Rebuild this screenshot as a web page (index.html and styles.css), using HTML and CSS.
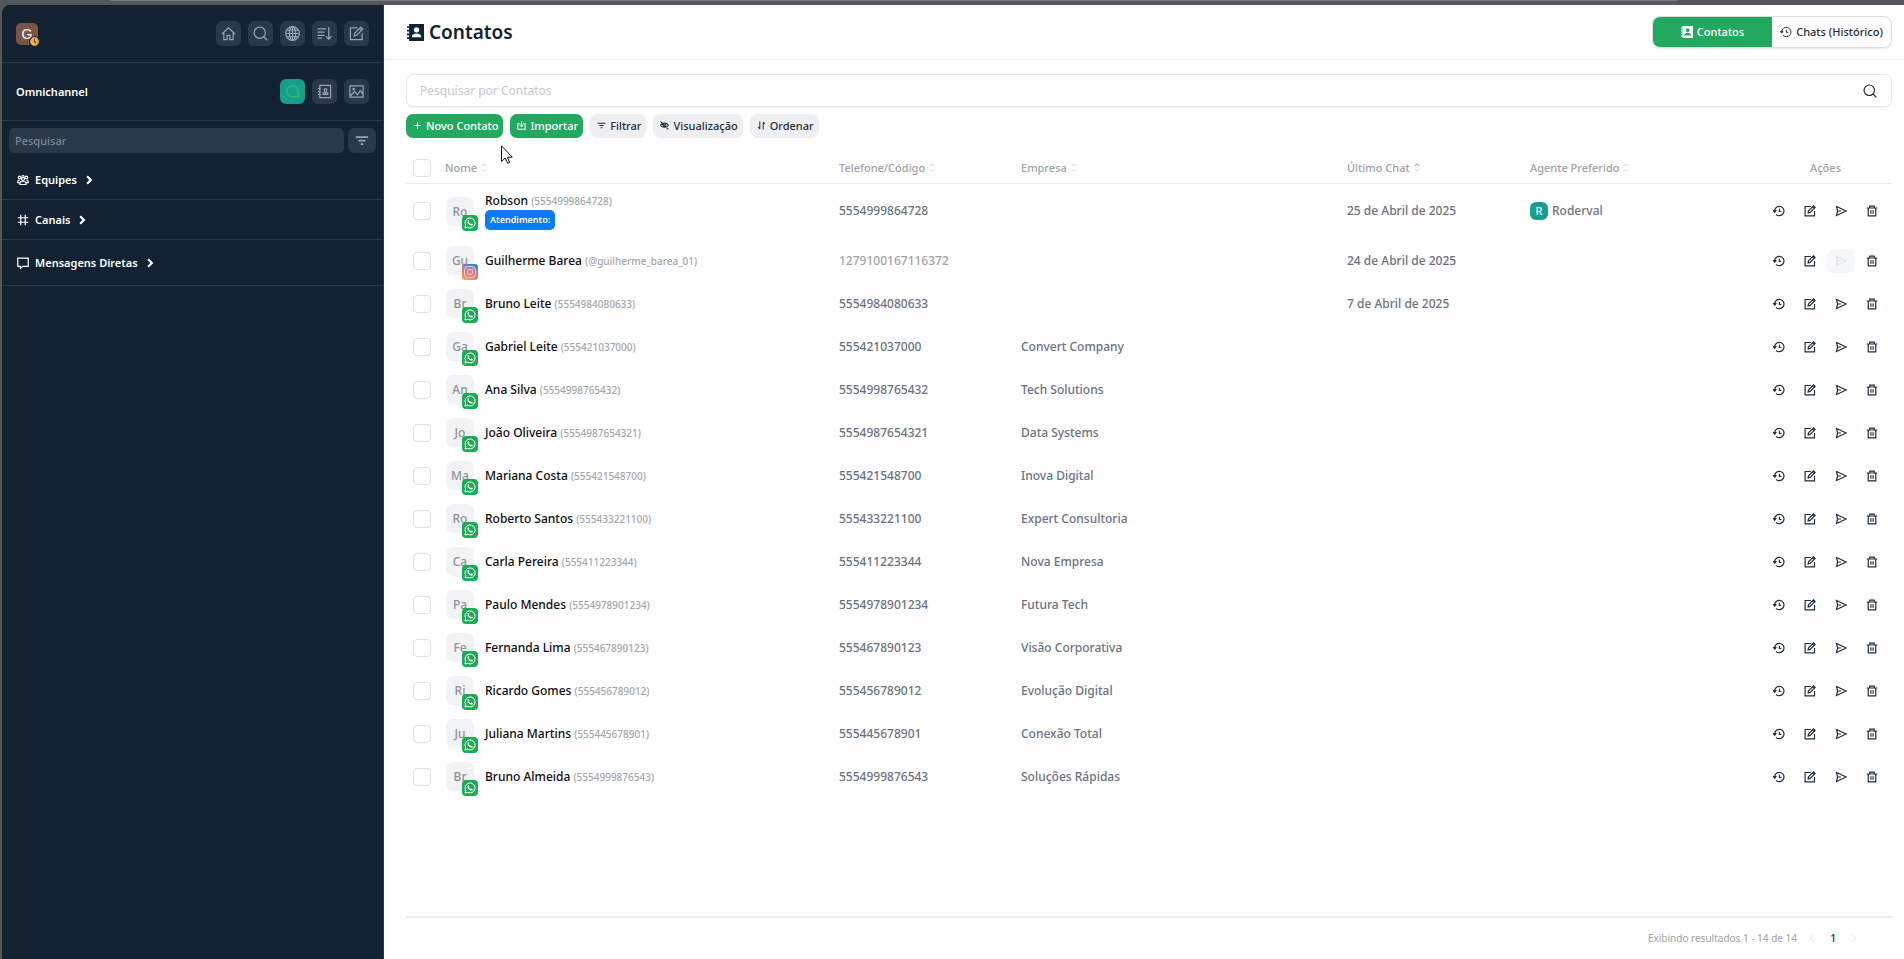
FILE: index.html
```html
<!DOCTYPE html>
<html lang="pt-BR">
<head>
  <meta charset="UTF-8">
  <meta name="viewport" content="width=device-width, initial-scale=1.0">
  <title>Contatos</title>
  <link rel="stylesheet" href="styles.css">
</head>
<body>

  <!-- Icon sprite -->
  <svg class="sprite" aria-hidden="true">
    <symbol id="home" viewBox="0 0 16 16"><path d="M1 8.500 8 2l7 6.500M3 7v7.500h3.500V10h3v4.500H13V7"/></symbol>
    <symbol id="search" viewBox="0 0 16 16"><circle cx="7.200" cy="7.200" r="6"/><path d="M11.500 11.500 15.300 15.300"/></symbol>
    <symbol id="globe" viewBox="0 0 16 16"><circle cx="8" cy="8" r="7.300"/><ellipse cx="8" cy="8" rx="3.400" ry="7.300"/><path d="M1 8h14M8 1v14M2 4.500h12M2 11.500h12"/></symbol>
    <symbol id="sort" viewBox="0 0 16 16"><path d="M.5 3h9M.5 6.500h7.500M.5 10h7.500M.5 13h5M12.500 1v13M9.500 11l3 3 3-3"/></symbol>
    <symbol id="edit" viewBox="0 0 16 16"><path d="M9 2H1.500v12.500H14V8M5.500 10.500l.5-2.800 6.600-6.600 2.200 2.200-6.600 6.600zM11.200 2.600l2.200 2.200"/></symbol>
    <symbol id="bubble" viewBox="0 0 16 16"><path d="M9 14H7.500A5.500 5.500 0 0 1 2 8.500v-1A5.500 5.500 0 0 1 7.500 2h1A5.500 5.500 0 0 1 14 7.500v3.500l1 2.500H9"/></symbol>
    <symbol id="book" viewBox="0 0 16 16"><path d="M3 1.500h11.500v13H3zM1 5h3M1 8h3M1 11h3M6.500 11V9.500h5V11z"/><circle cx="9" cy="6.500" r="1.500"/></symbol>
    <symbol id="image" viewBox="0 0 16 16"><path d="M1 2h14v12H1zM1.500 12.500 6 8l3 3.500 3-4.500 3 4"/><circle cx="5" cy="5.500" r=".8"/></symbol>
    <symbol id="filter" viewBox="0 0 16 16"><path d="M1 4h14M4 8h8M6.500 12h3"/></symbol>
    <symbol id="team" viewBox="0 0 16 16"><circle cx="8" cy="6.500" r="2"/><circle cx="3.500" cy="4.500" r="1.800"/><circle cx="12.500" cy="4.500" r="1.800"/><path d="M4 14v-1.500C4 10.500 5.500 10 8 10s4 .5 4 2.500V14zM3.500 11.500H1V9.500C1 8.500 2 8 4 8M12.500 11.500H15V9.500c0-1-1-1.500-3-1.500M6.500 3.500a1.500 1.500 0 0 1 3 0"/></symbol>
    <symbol id="hash" viewBox="0 0 16 16"><path d="M5 1v14M11 1v14M1 5h14M1 11h14"/></symbol>
    <symbol id="message" viewBox="0 0 16 16"><path d="M1 1.500h14v11H8L4.500 15v-2.500H1z"/></symbol>
    <symbol id="right" viewBox="0 0 16 16"><path d="m5.500 3 5 5-5 5"/></symbol>
    <symbol id="left" viewBox="0 0 16 16"><path d="m10.500 3-5 5 5 5"/></symbol>
    <symbol id="bookFill" viewBox="0 0 16 16"><path fill="currentColor" stroke="none" fill-rule="evenodd" d="M2 0h14v16H2v-2H0v-1.500h2V10.500H0V9h2V7H0V5.500h2V3.500H0V2h2zm7 3a2.500 2.500 0 1 0 0 5 2.500 2.500 0 0 0 0-5zm-4.500 9.500h9c0-2-1.800-3.500-4.500-3.500s-4.500 1.500-4.500 3.500z"/></symbol>
    <symbol id="history" viewBox="0 0 16 16"><path d="M2.200 8A6.200 6.200 0 1 1 4 12.400M8.500 5v3.500H11"/><path fill="currentColor" d="M.8 7.300h3L2.300 9.500z"/></symbol>
    <symbol id="send" viewBox="0 0 16 16"><path d="m2 2 13 6-13 6 1.500-6zM3.500 8H8"/></symbol>
    <symbol id="trash" viewBox="0 0 16 16"><path d="M1 4h14M5 4V1.500h6V4M3 4v10.500h10V4M6.500 7v4.500M9.500 7v4.500"/></symbol>
    <symbol id="plus" viewBox="0 0 16 16"><path d="M8 2v12M2 8h12"/></symbol>
    <symbol id="import" viewBox="0 0 16 16"><path d="M5 5H1.500v9.500h13V5H11M8 1v9M5 7l3 3 3-3"/></symbol>
    <symbol id="hidden" viewBox="0 0 16 16"><path d="M1 7.500C4 2.500 12 2.500 15 7.500 12 12.500 4 12.500 1 7.500zM1 1l14 14"/><circle cx="8" cy="7.500" r="2.500"/></symbol>
    <symbol id="order" viewBox="0 0 16 16"><path d="M5 1v13M2 11l3 3M11 15V2M11 2l3 3"/></symbol>
    <symbol id="sorter" viewBox="0 0 8 12"><path class="asc" d="m1 4 3-3 3 3"/><path class="desc" d="m1 8 3 3 3-3"/></symbol>
    <symbol id="whatsapp" viewBox="0 0 16 16">
      <rect width="16" height="16" rx="4" fill="#1cab55" stroke="none"/>
      <path stroke="#fff" stroke-width="1" d="m3 13 .7-2.600A5 5 0 1 1 5.600 12.300z"/>
      <path fill="#fff" stroke="none" d="M6 5.200c.6-.4.900-.1 1.300 1.200l-.5.700c.5 1 1.100 1.600 2.100 2l.7-.7c1.300.5 1.500.8 1.100 1.500-.8 1.200-2.600.7-3.900-.6C5.500 8 5 6 6 5.200z"/>
    </symbol>
    <symbol id="instagram" viewBox="0 0 16 16">
      <linearGradient id="insta" x1="0" y1="1" x2=".4" y2="0"><stop offset="0" stop-color="#efb266"/><stop offset=".45" stop-color="#e27c77"/><stop offset=".75" stop-color="#b77ba5"/><stop offset="1" stop-color="#3f83c4"/></linearGradient>
      <rect width="16" height="16" rx="3" fill="url(#insta)" stroke="none"/>
      <g stroke="#f6cfc4" stroke-width="1"><rect x="2.500" y="2.500" width="11" height="11" rx="3.500"/><circle cx="8" cy="8" r="2.700"/></g>
      <circle cx="11" cy="5" r=".8" fill="#f6cfc4" stroke="none"/>
    </symbol>
  </svg>

  <div class="window-bar"></div>

  <div class="app">
    <aside class="sidebar">
      <div class="sidebar-head">
        <div class="user">G
          <svg class="user-status" viewBox="0 0 10 10"><circle cx="5" cy="5" r="4.500" fill="#e9b04e" stroke="#122231"/><path stroke="#5c4a2c" d="M5 2.500V5l1.500 1.500"/></svg>
        </div>
        <nav class="tools">
          <button class="tool" aria-label="Início"><svg><use href="#home"/></svg></button>
          <button class="tool" aria-label="Buscar"><svg><use href="#search"/></svg></button>
          <button class="tool" aria-label="Diretório"><svg><use href="#globe"/></svg></button>
          <button class="tool" aria-label="Organizar"><svg><use href="#sort"/></svg></button>
          <button class="tool" aria-label="Criar novo"><svg><use href="#edit"/></svg></button>
        </nav>
      </div>

      <div class="sidebar-head">
        <strong>Omnichannel</strong>
        <nav class="tools">
          <button class="tool active" aria-label="Atendimento"><svg><use href="#bubble"/></svg></button>
          <button class="tool" aria-label="Contatos"><svg><use href="#book"/></svg></button>
          <button class="tool" aria-label="Mídia"><svg><use href="#image"/></svg></button>
        </nav>
      </div>

      <div class="sidebar-search">
        <input type="text" placeholder="Pesquisar" aria-label="Pesquisar">
        <button class="tool" aria-label="Filtrar"><svg><use href="#filter"/></svg></button>
      </div>

      <button class="group"><svg><use href="#team"/></svg>Equipes<svg class="arrow"><use href="#right"/></svg></button>
      <button class="group"><svg><use href="#hash"/></svg>Canais<svg class="arrow"><use href="#right"/></svg></button>
      <button class="group tall"><svg><use href="#message"/></svg>Mensagens Diretas<svg class="arrow"><use href="#right"/></svg></button>
    </aside>

    <main class="main">
      <header class="page-head">
        <h1><svg><use href="#bookFill"/></svg>Contatos</h1>
        <div class="tabs">
          <button class="tab selected"><svg><use href="#bookFill"/></svg>Contatos</button>
          <button class="tab"><svg><use href="#history"/></svg>Chats (Histórico)</button>
        </div>
      </header>

      <div class="content">
        <div class="search">
          <input type="text" placeholder="Pesquisar por Contatos" aria-label="Pesquisar por Contatos">
          <svg><use href="#search"/></svg>
        </div>

        <div class="toolbar">
          <button class="btn primary"><svg><use href="#plus"/></svg>Novo Contato</button>
          <button class="btn primary"><svg><use href="#import"/></svg>Importar</button>
          <button class="btn"><svg><use href="#filter"/></svg>Filtrar</button>
          <button class="btn"><svg><use href="#hidden"/></svg>Visualização</button>
          <button class="btn"><svg><use href="#order"/></svg>Ordenar</button>
        </div>

        <table class="contacts">
          <colgroup>
            <col class="col-check"><col class="col-name"><col class="col-phone"><col class="col-company"><col class="col-chat"><col class="col-agent"><col class="col-actions">
          </colgroup>
          <thead>
            <tr>
              <th><input type="checkbox" aria-label="Selecionar todos"></th>
              <th>Nome<svg class="sorter"><use href="#sorter"/></svg></th>
              <th>Telefone/Código<svg class="sorter"><use href="#sorter"/></svg></th>
              <th>Empresa<svg class="sorter"><use href="#sorter"/></svg></th>
              <th>Último Chat<svg class="sorter sorted"><use href="#sorter"/></svg></th>
              <th>Agente Preferido<svg class="sorter"><use href="#sorter"/></svg></th>
              <th class="center">Ações</th>
            </tr>
          </thead>
          <tbody>
            <tr class="first">
              <td><input type="checkbox" aria-label="Robson"></td>
              <td><div class="contact"><span class="avatar">Ro<svg><use href="#whatsapp"/></svg></span><div><b>Robson</b> <small>(5554999864728)</small><span class="tag">Atendimento:</span></div></div></td>
              <td>5554999864728</td><td></td><td>25 de Abril de 2025</td>
              <td><div class="agent"><span>R</span>Roderval</div></td>
              <td><div class="actions"><button aria-label="Histórico"><svg><use href="#history"/></svg></button><button aria-label="Editar"><svg><use href="#edit"/></svg></button><button aria-label="Enviar"><svg><use href="#send"/></svg></button><button aria-label="Excluir"><svg><use href="#trash"/></svg></button></div></td>
            </tr>
            <tr>
              <td><input type="checkbox" aria-label="Guilherme Barea"></td>
              <td><div class="contact"><span class="avatar">Gu<svg><use href="#instagram"/></svg></span><div><b>Guilherme Barea</b> <small>(@guilherme_barea_01)</small></div></div></td>
              <td class="muted">1279100167116372</td><td></td><td>24 de Abril de 2025</td><td></td>
              <td><div class="actions"><button aria-label="Histórico"><svg><use href="#history"/></svg></button><button aria-label="Editar"><svg><use href="#edit"/></svg></button><button aria-label="Enviar" disabled><svg><use href="#send"/></svg></button><button aria-label="Excluir"><svg><use href="#trash"/></svg></button></div></td>
            </tr>
            <tr>
              <td><input type="checkbox" aria-label="Bruno Leite"></td>
              <td><div class="contact"><span class="avatar">Br<svg><use href="#whatsapp"/></svg></span><div><b>Bruno Leite</b> <small>(5554984080633)</small></div></div></td>
              <td>5554984080633</td><td></td><td>7 de Abril de 2025</td><td></td>
              <td><div class="actions"><button aria-label="Histórico"><svg><use href="#history"/></svg></button><button aria-label="Editar"><svg><use href="#edit"/></svg></button><button aria-label="Enviar"><svg><use href="#send"/></svg></button><button aria-label="Excluir"><svg><use href="#trash"/></svg></button></div></td>
            </tr>
            <tr>
              <td><input type="checkbox" aria-label="Gabriel Leite"></td>
              <td><div class="contact"><span class="avatar">Ga<svg><use href="#whatsapp"/></svg></span><div><b>Gabriel Leite</b> <small>(555421037000)</small></div></div></td>
              <td>555421037000</td><td>Convert Company</td><td></td><td></td>
              <td><div class="actions"><button aria-label="Histórico"><svg><use href="#history"/></svg></button><button aria-label="Editar"><svg><use href="#edit"/></svg></button><button aria-label="Enviar"><svg><use href="#send"/></svg></button><button aria-label="Excluir"><svg><use href="#trash"/></svg></button></div></td>
            </tr>
            <tr>
              <td><input type="checkbox" aria-label="Ana Silva"></td>
              <td><div class="contact"><span class="avatar">An<svg><use href="#whatsapp"/></svg></span><div><b>Ana Silva</b> <small>(5554998765432)</small></div></div></td>
              <td>5554998765432</td><td>Tech Solutions</td><td></td><td></td>
              <td><div class="actions"><button aria-label="Histórico"><svg><use href="#history"/></svg></button><button aria-label="Editar"><svg><use href="#edit"/></svg></button><button aria-label="Enviar"><svg><use href="#send"/></svg></button><button aria-label="Excluir"><svg><use href="#trash"/></svg></button></div></td>
            </tr>
            <tr>
              <td><input type="checkbox" aria-label="João Oliveira"></td>
              <td><div class="contact"><span class="avatar">Jo<svg><use href="#whatsapp"/></svg></span><div><b>João Oliveira</b> <small>(5554987654321)</small></div></div></td>
              <td>5554987654321</td><td>Data Systems</td><td></td><td></td>
              <td><div class="actions"><button aria-label="Histórico"><svg><use href="#history"/></svg></button><button aria-label="Editar"><svg><use href="#edit"/></svg></button><button aria-label="Enviar"><svg><use href="#send"/></svg></button><button aria-label="Excluir"><svg><use href="#trash"/></svg></button></div></td>
            </tr>
            <tr>
              <td><input type="checkbox" aria-label="Mariana Costa"></td>
              <td><div class="contact"><span class="avatar">Ma<svg><use href="#whatsapp"/></svg></span><div><b>Mariana Costa</b> <small>(555421548700)</small></div></div></td>
              <td>555421548700</td><td>Inova Digital</td><td></td><td></td>
              <td><div class="actions"><button aria-label="Histórico"><svg><use href="#history"/></svg></button><button aria-label="Editar"><svg><use href="#edit"/></svg></button><button aria-label="Enviar"><svg><use href="#send"/></svg></button><button aria-label="Excluir"><svg><use href="#trash"/></svg></button></div></td>
            </tr>
            <tr>
              <td><input type="checkbox" aria-label="Roberto Santos"></td>
              <td><div class="contact"><span class="avatar">Ro<svg><use href="#whatsapp"/></svg></span><div><b>Roberto Santos</b> <small>(555433221100)</small></div></div></td>
              <td>555433221100</td><td>Expert Consultoria</td><td></td><td></td>
              <td><div class="actions"><button aria-label="Histórico"><svg><use href="#history"/></svg></button><button aria-label="Editar"><svg><use href="#edit"/></svg></button><button aria-label="Enviar"><svg><use href="#send"/></svg></button><button aria-label="Excluir"><svg><use href="#trash"/></svg></button></div></td>
            </tr>
            <tr>
              <td><input type="checkbox" aria-label="Carla Pereira"></td>
              <td><div class="contact"><span class="avatar">Ca<svg><use href="#whatsapp"/></svg></span><div><b>Carla Pereira</b> <small>(555411223344)</small></div></div></td>
              <td>555411223344</td><td>Nova Empresa</td><td></td><td></td>
              <td><div class="actions"><button aria-label="Histórico"><svg><use href="#history"/></svg></button><button aria-label="Editar"><svg><use href="#edit"/></svg></button><button aria-label="Enviar"><svg><use href="#send"/></svg></button><button aria-label="Excluir"><svg><use href="#trash"/></svg></button></div></td>
            </tr>
            <tr>
              <td><input type="checkbox" aria-label="Paulo Mendes"></td>
              <td><div class="contact"><span class="avatar">Pa<svg><use href="#whatsapp"/></svg></span><div><b>Paulo Mendes</b> <small>(5554978901234)</small></div></div></td>
              <td>5554978901234</td><td>Futura Tech</td><td></td><td></td>
              <td><div class="actions"><button aria-label="Histórico"><svg><use href="#history"/></svg></button><button aria-label="Editar"><svg><use href="#edit"/></svg></button><button aria-label="Enviar"><svg><use href="#send"/></svg></button><button aria-label="Excluir"><svg><use href="#trash"/></svg></button></div></td>
            </tr>
            <tr>
              <td><input type="checkbox" aria-label="Fernanda Lima"></td>
              <td><div class="contact"><span class="avatar">Fe<svg><use href="#whatsapp"/></svg></span><div><b>Fernanda Lima</b> <small>(555467890123)</small></div></div></td>
              <td>555467890123</td><td>Visão Corporativa</td><td></td><td></td>
              <td><div class="actions"><button aria-label="Histórico"><svg><use href="#history"/></svg></button><button aria-label="Editar"><svg><use href="#edit"/></svg></button><button aria-label="Enviar"><svg><use href="#send"/></svg></button><button aria-label="Excluir"><svg><use href="#trash"/></svg></button></div></td>
            </tr>
            <tr>
              <td><input type="checkbox" aria-label="Ricardo Gomes"></td>
              <td><div class="contact"><span class="avatar">Ri<svg><use href="#whatsapp"/></svg></span><div><b>Ricardo Gomes</b> <small>(555456789012)</small></div></div></td>
              <td>555456789012</td><td>Evolução Digital</td><td></td><td></td>
              <td><div class="actions"><button aria-label="Histórico"><svg><use href="#history"/></svg></button><button aria-label="Editar"><svg><use href="#edit"/></svg></button><button aria-label="Enviar"><svg><use href="#send"/></svg></button><button aria-label="Excluir"><svg><use href="#trash"/></svg></button></div></td>
            </tr>
            <tr>
              <td><input type="checkbox" aria-label="Juliana Martins"></td>
              <td><div class="contact"><span class="avatar">Ju<svg><use href="#whatsapp"/></svg></span><div><b>Juliana Martins</b> <small>(555445678901)</small></div></div></td>
              <td>555445678901</td><td>Conexão Total</td><td></td><td></td>
              <td><div class="actions"><button aria-label="Histórico"><svg><use href="#history"/></svg></button><button aria-label="Editar"><svg><use href="#edit"/></svg></button><button aria-label="Enviar"><svg><use href="#send"/></svg></button><button aria-label="Excluir"><svg><use href="#trash"/></svg></button></div></td>
            </tr>
            <tr>
              <td><input type="checkbox" aria-label="Bruno Almeida"></td>
              <td><div class="contact"><span class="avatar">Br<svg><use href="#whatsapp"/></svg></span><div><b>Bruno Almeida</b> <small>(5554999876543)</small></div></div></td>
              <td>5554999876543</td><td>Soluções Rápidas</td><td></td><td></td>
              <td><div class="actions"><button aria-label="Histórico"><svg><use href="#history"/></svg></button><button aria-label="Editar"><svg><use href="#edit"/></svg></button><button aria-label="Enviar"><svg><use href="#send"/></svg></button><button aria-label="Excluir"><svg><use href="#trash"/></svg></button></div></td>
            </tr>
          </tbody>
        </table>

        <footer class="pager">
          <span>Exibindo resultados 1 - 14 de 14</span>
          <button aria-label="Anterior" disabled><svg><use href="#left"/></svg></button>
          <button class="current">1</button>
          <button aria-label="Próxima" disabled><svg><use href="#right"/></svg></button>
        </footer>
      </div>
    </main>
  </div>

  <svg class="pointer" viewBox="0 0 12 19" aria-hidden="true"><path fill="#fff" stroke="#111" d="M.5.8v15.700l3.700-3.500 2.500 5.300 2-.9-2.400-5.200h5z"/></svg>

</body>
</html>
```
FILE: styles.css
```css
* {
  box-sizing: border-box;
}

body {
  margin: 0;
  min-height: 100vh;
  display: flex;
  flex-direction: column;
  background-color: #55575b;
  font-family: "Noto Sans", "Open Sans", sans-serif;
  font-size: 12px;
  line-height: 16px;
  color: #6b7280;
}

button, input {
  font-family: inherit;
  font-size: inherit;
  line-height: inherit;
}

button {
  display: flex;
  align-items: center;
  justify-content: center;
  padding: 0;
  border: none;
  background: none;
  color: inherit;
  cursor: pointer;
}

svg {
  flex: none;
  fill: none;
  stroke: currentColor;
  stroke-width: 1.3;
}

.sprite {
  position: absolute;
  width: 0;
  height: 0;
}

.window-bar {
  height: 5px;
  margin-left: 110px;
  margin-right: 227px;
  border-top: 1px solid #77797d;
}

.app {
  flex: 1;
  display: flex;
  padding-left: 2px;
}

/* Sidebar */
.sidebar {
  width: 382px;
  flex: none;
  background-color: #122231;
  border-right: 1px solid #27384a;
  border-top-left-radius: 8px;
  color: #fff;
}

.sidebar-head {
  display: flex;
  align-items: center;
  justify-content: space-between;
  height: 58px;
  padding: 0 14px;
  border-bottom: 1px solid #27384a;
}

.sidebar-head strong {
  font-size: 11px;
  font-weight: 600;
}

.user {
  position: relative;
  width: 22px;
  height: 22px;
  border-radius: 5px;
  background-color: #795548;
  font-family: "Liberation Sans", sans-serif;
  font-size: 14px;
  line-height: 22px;
  text-align: center;
}

.user-status {
  position: absolute;
  right: -2px;
  bottom: -2px;
  width: 11px;
  height: 11px;
  stroke-width: 1;
}

.tools {
  display: flex;
  gap: 7px;
}

.tool {
  width: 25px;
  height: 25px;
  border-radius: 6px;
  background-color: #29394a;
  color: #94a6b8;
}

.tool svg {
  width: 15px;
  height: 15px;
}

.tool.active {
  background-color: #179e8d;
  color: #35c16d;
}

.sidebar-search {
  display: flex;
  gap: 4px;
  padding: 7px;
}

.sidebar-search input {
  flex: 1;
  height: 25px;
  padding: 0 6px;
  border: none;
  border-radius: 5px;
  background-color: #29394a;
  font-size: 11px;
  font-weight: 500;
  color: #fff;
}

.sidebar-search input::placeholder {
  color: #7b8794;
}

.sidebar-search .tool {
  width: 28px;
}

.sidebar-search svg {
  width: 14px;
  stroke-width: 2;
}

.group {
  width: 100%;
  height: 40px;
  justify-content: flex-start;
  gap: 6px;
  padding: 0 15px;
  border-bottom: 1px solid #27384a;
  font-size: 11px;
  font-weight: 600;
}

.group.tall {
  height: 46px;
}

.group svg {
  width: 12px;
  height: 12px;
  stroke-width: 1.6;
}

.group .arrow {
  stroke-width: 2.8;
}

/* Page header */
.main {
  flex: 1;
  min-width: 0;
  display: flex;
  flex-direction: column;
  background-color: #fefefe;
}

.page-head {
  display: flex;
  align-items: center;
  justify-content: space-between;
  height: 55px;
  padding: 0 12px 0 23px;
  border-bottom: 1px solid #ebecee;
}

h1 {
  display: flex;
  align-items: center;
  gap: 5px;
  margin: 0;
  font-size: 19px;
  line-height: 24px;
  font-weight: 600;
  color: #122231;
}

h1 svg {
  width: 17px;
  height: 17px;
}

.tabs {
  display: flex;
  width: 240px;
  height: 32px;
  border: 1px solid #d9dee5;
  border-radius: 8px;
  overflow: hidden;
  box-shadow: 0 1px 2px rgba(0, 0, 0, 0.08);
}

.tab {
  flex: 1;
  gap: 4px;
  font-weight: 500;
  white-space: nowrap;
  font-size: 11px;
  color: #1f2d3d;
}

.tab.selected {
  background-color: #21a95f;
  color: #fff;
}

.tab svg {
  width: 12px;
  height: 12px;
}

/* Search and toolbar */
.content {
  flex: 1;
  display: flex;
  flex-direction: column;
  padding: 14px 12px 0 22px;
}

.search {
  display: flex;
  align-items: center;
  height: 33px;
  padding: 0 14px 0 13px;
  border: 1px solid #e6e8ea;
  border-radius: 7px;
  box-shadow: 0 1px 1px rgba(0, 0, 0, 0.04);
  color: #122231;
}

.search input {
  flex: 1;
  padding: 0;
  border: none;
  outline: none;
  background: none;
}

.search input::placeholder {
  color: #c5c8cc;
}

.search svg {
  width: 14px;
  height: 14px;
}

.toolbar {
  display: flex;
  gap: 7px;
  padding: 7px 0 15px;
}

.btn {
  height: 24px;
  gap: 4px;
  padding: 0 5px 0 7px;
  border-radius: 7px;
  background-color: #eeeff1;
  font-size: 11px;
  font-weight: 500;
  color: #1f2d3d;
}

.btn svg {
  width: 9px;
  height: 9px;
  margin-bottom: 2px;
  stroke-width: 1.8;
}

.btn.primary {
  background-color: #21a95f;
  color: #fff;
}

/* Contacts table */
.contacts {
  width: 100%;
  table-layout: fixed;
  border-collapse: collapse;
  font-weight: 500;
}

.col-check { width: 39px; }
.col-name { width: 394px; }
.col-phone { width: 182px; }
.col-company { width: 326px; }
.col-chat { width: 183px; }
.col-agent { width: 229px; }
.col-actions { width: 133px; }

th, td {
  padding: 0;
  text-align: left;
}

th {
  height: 30px;
  border-bottom: 1px solid #ebecee;
  font-size: 11px;
  font-weight: 500;
  color: #9ea2a8;
}

th.center {
  text-align: center;
}

.sorter {
  width: 6px;
  height: 9px;
  margin-left: 4px;
  margin-bottom: 2px;
  vertical-align: middle;
  color: #d5d8dc;
}

.asc, .desc {
  stroke: #d5d8dc;
}

.asc {
  stroke: currentColor;
}

.sorted {
  color: #85898f;
}

td {
  height: 43px;
}

.first td {
  height: 56px;
}

.contacts input {
  appearance: none;
  display: block;
  width: 18px;
  height: 18px;
  margin: 0 0 0 7px;
  border: 1px solid #dfe1e4;
  border-radius: 4px;
}

.contact {
  display: flex;
  align-items: center;
  gap: 11px;
}

.contact b {
  font-weight: 500;
  color: #0c0d0f;
}

.contact small {
  font-size: 10px;
  color: #a3a6ab;
}

.avatar {
  position: relative;
  width: 28px;
  height: 29px;
  margin-left: 1px;
  border-radius: 7px;
  background-color: #f2f3f5;
  line-height: 29px;
  text-align: center;
  color: #8f9297;
}

.avatar svg {
  position: absolute;
  right: -4px;
  bottom: -5px;
  width: 16px;
  height: 16px;
}

.tag {
  display: block;
  width: fit-content;
  height: 20px;
  margin-top: 1px;
  padding: 0 5px;
  border-radius: 5px;
  background-color: #0a7aff;
  font-size: 9px;
  line-height: 20px;
  font-weight: 600;
  color: #fff;
}

.muted {
  color: #9ea2a8;
}

.agent {
  display: flex;
  align-items: center;
  gap: 4px;
}

.agent span {
  width: 18px;
  height: 18px;
  border-radius: 6px;
  background-color: #179e8d;
  font-size: 11px;
  line-height: 18px;
  text-align: center;
  color: #fff;
}

.actions {
  display: flex;
  justify-content: flex-end;
  gap: 3px;
  padding-right: 6px;
  color: #1f2d3d;
}

.actions button {
  width: 28px;
  height: 24px;
  border-radius: 6px;
}

.actions button:disabled {
  background-color: #f6f7f9;
  color: #dfe1e4;
}

.actions svg {
  width: 12px;
  height: 12px;
  stroke-width: 1.6;
}

/* Pagination */
.pager {
  display: flex;
  align-items: center;
  justify-content: flex-end;
  gap: 9px;
  height: 43px;
  margin-top: auto;
  padding: 0 32px 2px 0;
  border-top: 2px solid #ebecee;
  font-size: 10px;
  color: #9ea2a8;
}

.pager button {
  width: 12px;
}

.pager button:disabled {
  color: #d5d8dc;
}

.pager svg {
  width: 10px;
  height: 10px;
}

.pager .current {
  font-weight: 600;
  color: #1f4d6d;
}

/* Mouse pointer over the page */
.pointer {
  position: absolute;
  left: 501px;
  top: 145px;
  width: 12px;
  height: 19px;
  stroke-width: 1;
}
```
